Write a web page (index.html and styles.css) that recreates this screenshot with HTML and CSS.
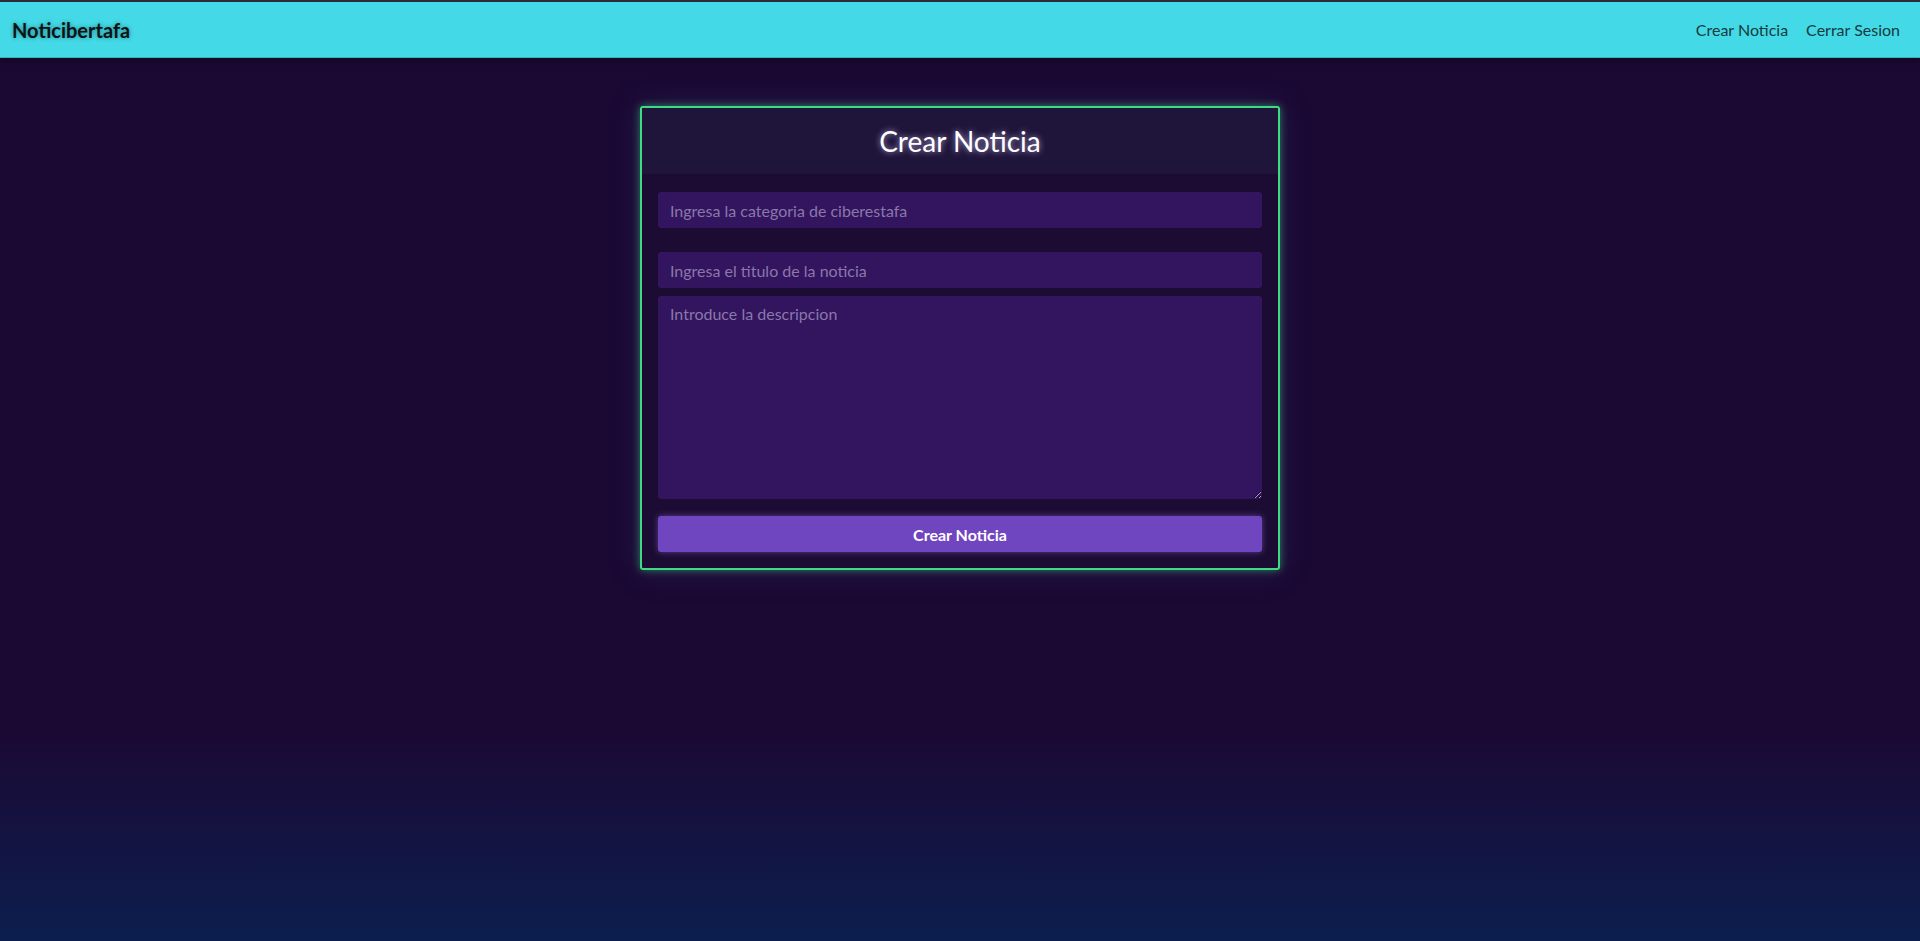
FILE: index.html
```html
<!DOCTYPE html>
<html lang="es">
<head>
<meta charset="utf-8">
<title>Noticibertafa</title>
<link rel="stylesheet" href="styles.css">
</head>
<body>
<header class="navbar">
  <a class="brand" href="#">Noticibertafa</a>
  <nav class="nav-links">
    <a href="#">Crear Noticia</a>
    <a href="#">Cerrar Sesion</a>
  </nav>
</header>
<main class="main">
  <section class="card">
    <div class="card-header"><h1>Crear Noticia</h1></div>
    <form class="card-body">
      <input class="field field-first" type="text" placeholder="Ingresa la categoria de ciberestafa">
      <input class="field" type="text" placeholder="Ingresa el titulo de la noticia">
      <textarea class="field area" placeholder="Introduce la descripcion"></textarea>
      <button class="btn" type="button">Crear Noticia</button>
    </form>
  </section>
</main>
</body>
</html>
```
FILE: styles.css
```css
* { box-sizing: border-box; }
html, body { height: 100%; }
body {
  margin: 0;
  font-family: Lato, "Open Sans", sans-serif;
  background: linear-gradient(to bottom, #1b0934 0%, #1b0934 78%, #0c1e4e 100%);
  min-height: 941px;
}
.navbar {
  height: 58px;
  border-top: 2px solid #2a2d3a;
  background: #43d9e6;
  border-bottom: 1px solid #2fb6c4;
  display: flex;
  align-items: center;
  justify-content: space-between;
  padding: 0 20px 0 12px;
  box-shadow: 0 3px 10px rgba(0,0,0,0.35);
}
.brand {
  color: #0a1416;
  text-decoration: none;
  font-size: 20px;
  font-weight: 700;
  text-shadow: 0 0 4px rgba(0,0,0,0.4);
}
.nav-links {
  display: flex;
  gap: 18px;
}
.nav-links a {
  color: #163a40;
  text-decoration: none;
  font-size: 16px;
}
.main {
  display: flex;
  justify-content: center;
  padding-top: 48px;
}
.card {
  width: 640px;
  border: 2px solid #3ddc84;
  border-radius: 3px;
  background: #1c0c33;
  box-shadow: 0 0 8px rgba(61,220,132,0.55), 0 0 30px rgba(60,60,110,0.35);
  overflow: hidden;
}
.card-header {
  height: 66px;
  background: #1f1439;
  display: flex;
  align-items: center;
  justify-content: center;
}
.card-header h1 {
  margin: 0;
  color: #ffffff;
  font-size: 28px;
  font-weight: 400;
  text-shadow: 0 0 6px rgba(210,200,255,0.8);
}
.card-body {
  padding: 18px 16px 16px;
  display: flex;
  flex-direction: column;
}
.field {
  display: block;
  width: 100%;
  height: 36px;
  background: #33145f;
  border: none;
  border-radius: 3px;
  padding: 0 12px;
  font-family: Lato, "Open Sans", sans-serif;
  font-size: 16px;
  color: #ffffff;
  outline: none;
  margin-bottom: 8px;
}
.field-first { margin-bottom: 24px; }
.field::placeholder { color: #8a78ab; }
.area {
  height: 203px;
  padding: 8px 12px;
  resize: vertical;
  margin-bottom: 17px;
}
.btn {
  height: 36px;
  width: 100%;
  border: none;
  border-radius: 3px;
  background: #7045c0;
  color: #ffffff;
  font-family: Lato, "Open Sans", sans-serif;
  font-size: 16px;
  font-weight: 700;
  box-shadow: 0 0 6px rgba(150,110,230,0.5);
  cursor: pointer;
}
```
